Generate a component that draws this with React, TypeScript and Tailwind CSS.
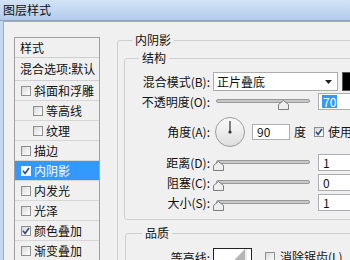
import React from 'react';

function Box({ checked, onBlue }: { checked?: boolean; onBlue?: boolean }) {
  return (
    <span
      className={`w-[10px] h-[10px] shrink-0 border flex items-center justify-center ${
        onBlue ? 'border-[#e8f2ff] bg-white' : 'border-[#8e8f8f] bg-gradient-to-br from-[#d9d9d9] to-white'
      }`}
    >
      {checked && (
        <svg width="8" height="8" viewBox="0 0 8 8">
          <path d="M1 3.8 L3.1 6.4 L7 1" fill="none" stroke="#2b4a8b" strokeWidth="1.6" />
        </svg>
      )}
    </span>
  );
}

function Slider({ at }: { at: number }) {
  return (
    <div className="relative w-[97px] h-[19px] shrink-0">
      <div className="absolute left-[3px] right-0 top-[7px] h-[4px] rounded-[2px] border border-[#9a9a9a] bg-[#c6c6c6]" />
      <svg className="absolute top-[8px]" style={{ left: at }} width="11" height="10" viewBox="0 0 11 10">
        <path d="M5.5 0.5 L10.5 4.5 L10.5 9.5 L0.5 9.5 L0.5 4.5 Z" fill="#eeeeee" stroke="#7d7d7d" />
      </svg>
    </div>
  );
}

function Num({ v, sel }: { v: string; sel?: boolean }) {
  return (
    <div className="ml-[8px] w-[60px] h-[17px] shrink-0 border border-[#abadb3] bg-white flex items-center pl-[3px]">
      <span className={sel ? 'bg-[#3399ff] text-white px-[1px] leading-[13px]' : 'pl-[1px]'}>{v}</span>
    </div>
  );
}

const items = [
  { t: '斜面和浮雕', i: false, c: false },
  { t: '等高线', i: true, c: false },
  { t: '纹理', i: true, c: false },
  { t: '描边', i: false, c: false },
  { t: '内阴影', i: false, c: true, s: true },
  { t: '内发光', i: false, c: false },
  { t: '光泽', i: false, c: false },
  { t: '颜色叠加', i: false, c: true },
  { t: '渐变叠加', i: false, c: false },
];

export default function App() {
  return (
    <div className="w-[350px] h-[260px] overflow-hidden bg-[#f0f0f0] flex flex-col text-[12px] leading-[16px] text-[#111] font-['Noto_Sans_CJK_SC',sans-serif]">
      <div className="h-[21px] shrink-0 flex items-center pl-[3px] bg-gradient-to-b from-[#d2e3f6] to-[#b3ccec] border-b border-[#8aa4c4]">
        图层样式
      </div>
      <div className="flex flex-1 min-h-0">
        <div className="w-[3px] bg-[#c3d7ef] shrink-0" />
        <div className="flex-1 flex items-start border-l border-t border-[#a9a9a9]">
          <div className="pl-[10px] pt-[15px] shrink-0">
            <div className="w-[86px] border-l border-t border-r border-[#a0a0a0]">
              <div className="h-[20px] border-b border-[#cfcfcf] flex items-center pl-[5px]">样式</div>
              <div className="h-[23px] border-b border-[#cfcfcf] flex items-center pl-[5px] whitespace-nowrap">混合选项:默认</div>
              {items.map((it) => (
                <div
                  key={it.t}
                  className={`h-[20px] border-b border-[#d6d6d6] flex items-center gap-[3px] ${it.i ? 'pl-[18px]' : 'pl-[6px]'} ${
                    it.s ? 'bg-[#3399ff] text-white' : ''
                  }`}
                >
                  <Box checked={it.c} onBlue={it.s} />
                  <span>{it.t}</span>
                </div>
              ))}
            </div>
          </div>

          <fieldset className="ml-[17px] mt-[10px] w-[260px] shrink-0 border border-[#cfcfcf] rounded-[3px]">
            <legend className="ml-[14px] px-[3px]">内阴影</legend>

            <fieldset className="ml-[6px] mt-[2px] w-[250px] border border-[#cfcfcf] rounded-[3px] pb-[7px]">
              <legend className="ml-[14px] px-[3px]">结构</legend>

              <div className="flex items-center h-[19px] mt-[6px]">
                <div className="w-[85px] text-right shrink-0">混合模式(B):</div>
                <div className="ml-[3px] w-[125px] h-[19px] shrink-0 border border-[#acacac] bg-white flex items-center justify-between pl-[3px] pr-[5px]">
                  <span>正片叠底</span>
                  <svg width="7" height="4" viewBox="0 0 7 4">
                    <path d="M0 0 L7 0 L3.5 4 Z" fill="#222" />
                  </svg>
                </div>
                <div className="ml-[4px] w-[30px] h-[19px] shrink-0 bg-black border border-[#555]" />
              </div>

              <div className="flex items-center h-[19px] mt-[1px]">
                <div className="w-[85px] text-right shrink-0">不透明度(O):</div>
                <div className="ml-[3px]" />
                <Slider at={65} />
                <Num v="70" sel />
              </div>

              <div className="flex items-center h-[30px] mt-[6px]">
                <div className="w-[85px] text-right shrink-0">角度(A):</div>
                <div className="ml-[5px] w-[30px] h-[30px] shrink-0 rounded-full border border-[#9c9c9c] bg-gradient-to-b from-[#fbfbfb] to-[#dedede] flex items-center justify-center">
                  <svg width="28" height="28" viewBox="0 0 28 28">
                    <line x1="14" y1="14" x2="14" y2="3" stroke="#333" strokeWidth="1.2" />
                    <circle cx="14" cy="14" r="1.6" fill="#333" />
                  </svg>
                </div>
                <div className="ml-[7px] w-[38px] h-[16px] shrink-0 border border-[#abadb3] bg-white flex items-center pl-[4px]">90</div>
                <span className="ml-[4px]">度</span>
                <span className="ml-[8px]">
                  <Box checked />
                </span>
                <span className="ml-[4px] whitespace-nowrap">使用全局光(G)</span>
              </div>

              <div className="flex items-center h-[19px] mt-[6px]">
                <div className="w-[85px] text-right shrink-0">距离(D):</div>
                <div className="ml-[3px]" />
                <Slider at={0} />
                <Num v="1" />
              </div>
              <div className="flex items-center h-[19px] mt-[1px]">
                <div className="w-[85px] text-right shrink-0">阻塞(C):</div>
                <div className="ml-[3px]" />
                <Slider at={0} />
                <Num v="0" />
              </div>
              <div className="flex items-center h-[19px] mt-[1px]">
                <div className="w-[85px] text-right shrink-0">大小(S):</div>
                <div className="ml-[3px]" />
                <Slider at={0} />
                <Num v="1" />
              </div>
            </fieldset>

            <fieldset className="ml-[7px] mt-[5px] w-[250px] border border-[#cfcfcf] rounded-[3px] pb-[6px]">
              <legend className="ml-[16px] px-[3px]">品质</legend>
              <div className="flex items-start mt-[7px]">
                <div className="w-[84px] text-right shrink-0 pt-[2px]">等高线:</div>
                <div className="ml-[3px] w-[39px] h-[34px] shrink-0 border border-[#222] bg-white">
                  <svg width="37" height="32" viewBox="0 0 37 32">
                    <polygon points="0,32 31,0 31,32" fill="#b5b5b5" />
                    <line x1="32" y1="0" x2="32" y2="32" stroke="#dcdcdc" />
                  </svg>
                </div>
                <span className="ml-[13px] mt-[4px]">
                  <Box />
                </span>
                <span className="ml-[5px] pt-[1px] whitespace-nowrap">消除锯齿(L)</span>
              </div>
            </fieldset>
          </fieldset>
        </div>
      </div>
    </div>
  );
}
